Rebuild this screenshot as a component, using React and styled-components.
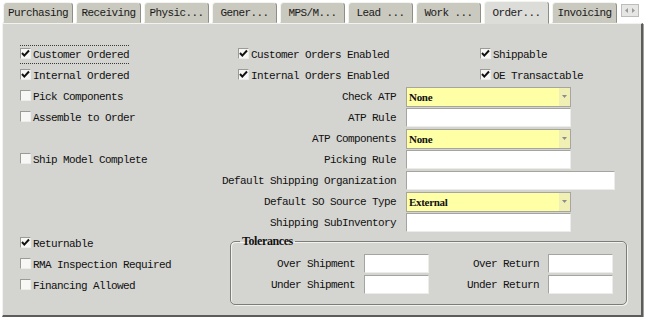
import styled, { createGlobalStyle } from "styled-components";

const GlobalStyle = createGlobalStyle`
  html, body {
    margin: 0;
    padding: 0;
    background: #ffffff;
  }
  body {
    font-family: "Liberation Mono", "DejaVu Sans Mono", monospace;
    font-size: 11px;
    letter-spacing: -0.6px;
    color: #111;
  }
`;

const tabs = [
    { label: "Purchasing", width: 70 },
    { label: "Receiving" },
    { label: "Physic..." },
    { label: "Gener..." },
    { label: "MPS/M..." },
    { label: "Lead ..." },
    { label: "Work ..." },
    { label: "Order...", active: true },
    { label: "Invoicing" },
];

function Check ( { checked } ) {
    return (
        <Box>
            { checked && (
                <svg width="9" height="9" viewBox="0 0 9 9">
                    <path d="M1 4 L3.3 6.6 L8 1.5" fill="none" stroke="#111" strokeWidth="2" />
                </svg>
            ) }
        </Box>
    );
}

function CheckItem ( { label, checked, focused, col = 1, row, indent = 0 } ) {
    return (
        <CheckLine $col={ col } $row={ row } $indent={ indent } $focused={ focused }>
            <Check checked={ checked } />
            { label }
        </CheckLine>
    );
}

function Combo ( { value, row } ) {
    return (
        <ComboBox $row={ row }>
            <ComboValue>{ value }</ComboValue>
            <Arrow>
                <svg width="5" height="3" viewBox="0 0 5 3">
                    <path d="M0 0 H5 L2.5 3 Z" fill="#8c8c8c" />
                </svg>
            </Arrow>
        </ComboBox>
    );
}

function App () {
    return (
        <Page>
            <GlobalStyle />
            <TabStrip>
                { tabs.map( ( tab ) => (
                    <Tab key={ tab.label } $width={ tab.width || 65 } $active={ tab.active }>
                        { tab.label }
                    </Tab>
                ) ) }
                <ScrollButton>
                    <svg width="10" height="5" viewBox="0 0 10 5">
                        <path d="M0 2.5 L3 0 V5 Z M10 2.5 L7 0 V5 Z" fill="#9a9a9a" />
                    </svg>
                </ScrollButton>
            </TabStrip>

            <Panel>
                <FormGrid>
                    <CheckItem row={ 1 } label="Customer Ordered" checked focused />
                    <CheckItem row={ 1 } col={ 2 } indent={ 20 } label="Customer Orders Enabled" checked />
                    <CheckItem row={ 1 } col={ 3 } indent={ 74 } label="Shippable" checked />

                    <CheckItem row={ 2 } label="Internal Ordered" checked />
                    <CheckItem row={ 2 } col={ 2 } indent={ 20 } label="Internal Orders Enabled" checked />
                    <CheckItem row={ 2 } col={ 3 } indent={ 74 } label="OE Transactable" checked />

                    <CheckItem row={ 3 } label="Pick Components" />
                    <FieldLabel $row={ 3 }>Check ATP</FieldLabel>
                    <Combo row={ 3 } value="None" />

                    <CheckItem row={ 4 } label="Assemble to Order" />
                    <FieldLabel $row={ 4 }>ATP Rule</FieldLabel>
                    <TextField $row={ 4 } />

                    <FieldLabel $row={ 5 }>ATP Components</FieldLabel>
                    <Combo row={ 5 } value="None" />

                    <CheckItem row={ 6 } label="Ship Model Complete" />
                    <FieldLabel $row={ 6 }>Picking Rule</FieldLabel>
                    <TextField $row={ 6 } />

                    <FieldLabel $row={ 7 }>Default Shipping Organization</FieldLabel>
                    <TextField $row={ 7 } $width={ 209 } />

                    <FieldLabel $row={ 8 }>Default SO Source Type</FieldLabel>
                    <Combo row={ 8 } value="External" />

                    <FieldLabel $row={ 9 }>Shipping SubInventory</FieldLabel>
                    <TextField $row={ 9 } />

                    <CheckItem row={ 10 } label="Returnable" checked />
                    <CheckItem row={ 11 } label="RMA Inspection Required" />
                    <CheckItem row={ 12 } label="Financing Allowed" />

                    <Tolerances>
                        <Legend>Tolerances</Legend>
                        <TolLabel>Over Shipment</TolLabel>
                        <TolField />
                        <TolLabel>Over Return</TolLabel>
                        <TolField />
                        <TolLabel>Under Shipment</TolLabel>
                        <TolField />
                        <TolLabel>Under Return</TolLabel>
                        <TolField />
                    </Tolerances>
                </FormGrid>
            </Panel>
        </Page>
    );
}

const Page = styled.div`
  padding: 1px 0 0 2px;
  width: 645px;
`;

const TabStrip = styled.div`
  display: flex;
  align-items: flex-end;
  gap: 3px;
  height: 22px;
  padding-left: 1px;
  position: relative;
  z-index: 2;
`;

const Tab = styled.div`
  box-sizing: border-box;
  width: ${ ( p ) => p.$width }px;
  height: ${ ( p ) => ( p.$active ? 23 : 21 ) }px;
  margin-bottom: ${ ( p ) => ( p.$active ? -1 : 0 ) }px;
  padding-top: ${ ( p ) => ( p.$active ? 5 : 4 ) }px;
  background: ${ ( p ) => ( p.$active ? "#dcdcd9" : "#c9c9bf" ) };
  border: 1px solid;
  border-color: #f4f4ef #8e8e86 transparent #f4f4ef;
  border-radius: 4px 4px 0 0;
  text-align: center;
  line-height: 13px;
  white-space: nowrap;
  color: #1a1a1a;
`;

const ScrollButton = styled.div`
  align-self: flex-start;
  margin: 3px 0 0 1px;
  width: 18px;
  height: 13px;
  box-sizing: border-box;
  border: 1px solid #bcbcb8;
  background: #e6e6e4;
  display: flex;
  align-items: center;
  justify-content: center;
`;

const Panel = styled.div`
  box-sizing: border-box;
  width: 641px;
  height: 294px;
  background: #d4d4d0;
  border-top: 1px solid #f2f2ee;
  border-left: 1px solid #f2f2ee;
  border-right: 2px solid #5c5c5a;
  border-bottom: 2px solid #5c5c5a;
  box-shadow: 1px 1px 0 #a2a2a0;
  padding: 20px 0 0 17px;
`;

const FormGrid = styled.div`
  display: grid;
  grid-template-columns: 198px 188px 1fr;
  grid-template-rows: repeat(12, 21px);
  align-items: center;
`;

const CheckLine = styled.label`
  grid-column: ${ ( p ) => p.$col };
  grid-row: ${ ( p ) => p.$row };
  justify-self: start;
  margin-left: ${ ( p ) => p.$indent }px;
  display: flex;
  align-items: center;
  box-sizing: border-box;
  height: 19px;
  white-space: nowrap;
  border-top: 1px dotted ${ ( p ) => ( p.$focused ? "#3a3a3a" : "transparent" ) };
  border-bottom: 1px dotted ${ ( p ) => ( p.$focused ? "#3a3a3a" : "transparent" ) };
`;

const Box = styled.span`
  box-sizing: border-box;
  width: 11px;
  height: 11px;
  margin: -2px 2px 0 0;
  border-top: 1px solid #9a9a96;
  border-left: 1px solid #9a9a96;
  border-right: 1px solid #ececea;
  border-bottom: 1px solid #ececea;
  background: #f7f7f5;
  display: flex;
  align-items: center;
  justify-content: center;
`;

const FieldLabel = styled.div`
  grid-column: 2;
  grid-row: ${ ( p ) => p.$row };
  text-align: right;
  padding-right: 10px;
  white-space: nowrap;
`;

const TextField = styled.div`
  grid-column: 3;
  grid-row: ${ ( p ) => p.$row };
  box-sizing: border-box;
  width: ${ ( p ) => p.$width || 165 }px;
  height: 19px;
  background: #ffffff;
  border: 1px solid;
  border-color: #a4a4a0 #ececea #ececea #a4a4a0;
`;

const ComboBox = styled.div`
  grid-column: 3;
  grid-row: ${ ( p ) => p.$row };
  box-sizing: border-box;
  width: 165px;
  height: 20px;
  background: #ffffa6;
  border: 1px solid #a6a69c;
  display: flex;
  align-items: center;
`;

const ComboValue = styled.span`
  flex: 1;
  padding-left: 2px;
  font-family: "Liberation Serif", "Times New Roman", serif;
  font-weight: bold;
  font-size: 11px;
  letter-spacing: -0.3px;
  color: #111;
`;

const Arrow = styled.span`
  width: 11px;
  height: 100%;
  background: #f0f0b4;
  display: flex;
  align-items: center;
  justify-content: center;
`;

const Tolerances = styled.fieldset`
  grid-column: 2 / span 2;
  grid-row: 10 / span 3;
  align-self: start;
  box-sizing: border-box;
  width: 397px;
  min-width: 0;
  margin: 2px 0 0 12px;
  padding: 5px 0 9px 0;
  border: 1px solid #7c7c7a;
  border-radius: 5px;
  box-shadow: 1px 1px 0 #f2f2ee, inset 1px 1px 0 #f2f2ee;
  display: grid;
  grid-template-columns: 124px 65px 101px 65px;
  grid-auto-rows: 21px;
  column-gap: 9px;
  align-items: center;
`;

const Legend = styled.legend`
  margin-left: 9px;
  padding: 0 2px;
  line-height: 13px;
  font-family: "Liberation Serif", "Times New Roman", serif;
  font-weight: bold;
  font-size: 12px;
  letter-spacing: -0.4px;
  color: #111;
`;

const TolLabel = styled.div`
  text-align: right;
  white-space: nowrap;
`;

const TolField = styled.div`
  box-sizing: border-box;
  width: 65px;
  height: 19px;
  background: #ffffff;
  border: 1px solid;
  border-color: #a4a4a0 #ececea #ececea #a4a4a0;
`;

export default App;
